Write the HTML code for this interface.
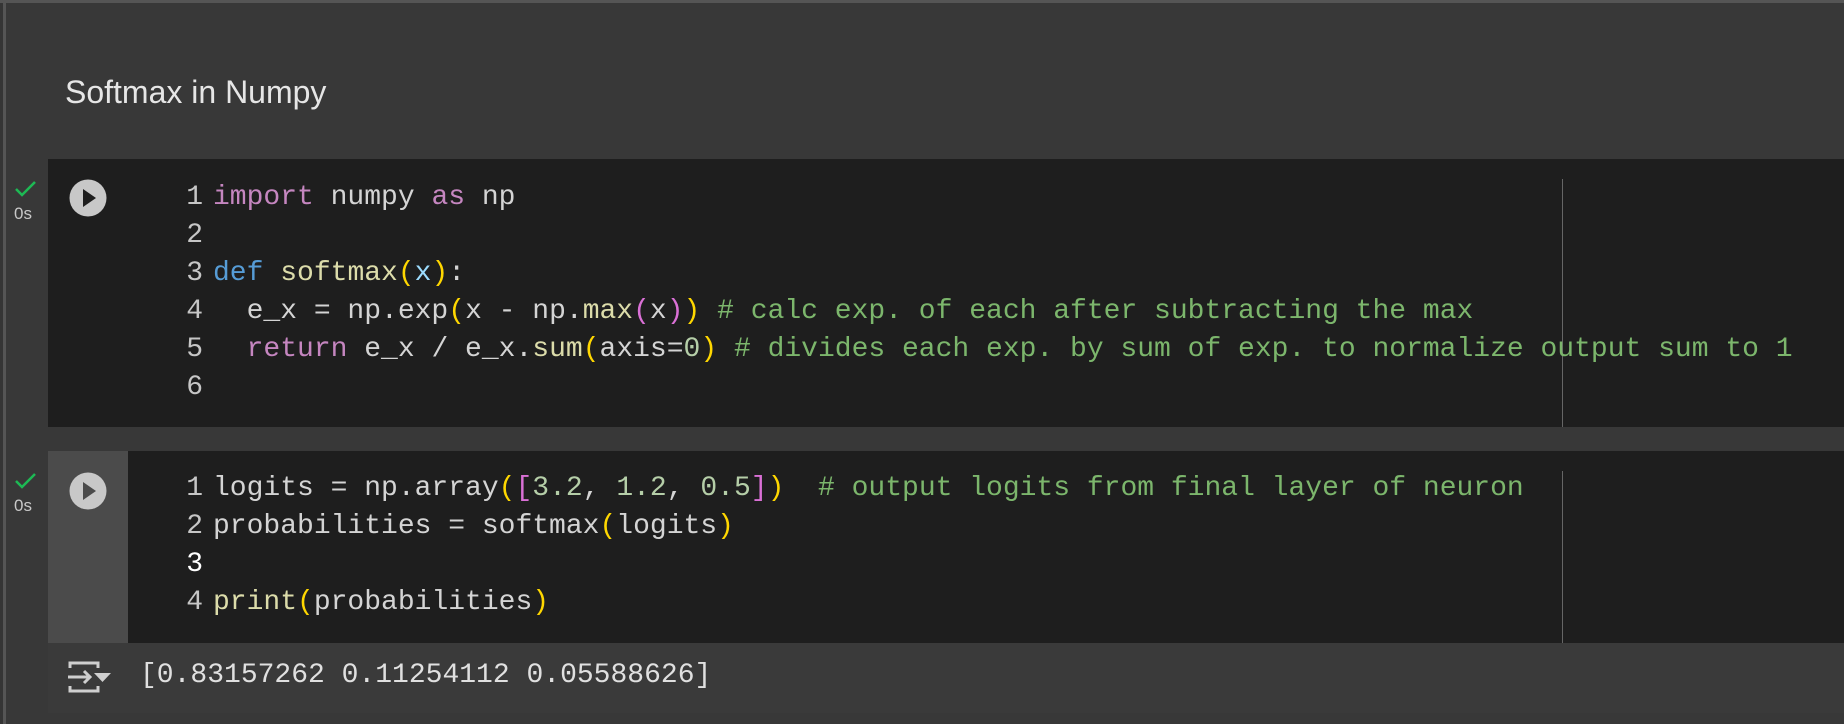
<!DOCTYPE html>
<html><head><style>
body{margin:0;width:1844px;height:724px;background:#353535;overflow:hidden;position:relative;font-family:"Liberation Sans",sans-serif}
.abs{position:absolute}
.code{font-family:"Liberation Mono",monospace;font-size:28px;line-height:38px;color:#d4d4d4;white-space:pre;letter-spacing:0}
.nums{text-align:right;width:40px;color:#c6c6c6}
.k{color:#c586c0}.d{color:#569cd6}.f{color:#dcdcaa}.p{color:#ffd700}.v{color:#9cdcfe}.c{color:#7cb66c}.n{color:#b5cea8}.b{color:#da70d6}
</style></head><body>
<div class="abs" style="left:0;top:0;width:1844px;height:3px;background:#555"></div>
<div class="abs" style="left:3px;top:0;width:3px;height:724px;background:#555"></div>
<div class="abs" style="left:6px;top:3px;width:1838px;height:721px;background:#383838"></div>
<div class="abs" style="left:65px;top:74px;font-size:32px;color:#e6e6e6">Softmax in Numpy</div>

<!-- cell 1 -->
<div class="abs" style="left:48px;top:159px;width:1796px;height:268px;background:#1e1e1e"></div>
<div class="abs" style="left:1562px;top:179px;width:1px;height:248px;background:#666"></div>
<svg class="abs" style="left:14px;top:180px" width="24" height="18"><path d="M2 9 L8 15 L21 2" stroke="#1db954" stroke-width="2.5" fill="none"/></svg>
<div class="abs" style="left:14px;top:204px;font-size:17px;color:#c8c8c8">0s</div>
<svg class="abs" style="left:69px;top:179px" width="38" height="38"><circle cx="19" cy="19" r="18.5" fill="#c8c8c8"/><path d="M14 10 L27 19 L14 28Z" fill="#1e1e1e"/></svg>
<div class="abs code nums" style="left:163px;top:179px">1
2
3
4
5
6</div>
<div class="abs code" style="left:213px;top:179px"><span class="k">import</span> numpy <span class="k">as</span> np

<span class="d">def</span> <span class="f">softmax</span><span class="p">(</span><span class="v">x</span><span class="p">)</span>:
  e_x = np.exp<span class="p">(</span>x - np.<span class="f">max</span><span class="b">(</span>x<span class="b">)</span><span class="p">)</span> <span class="c"># calc exp. of each after subtracting the max</span>
  <span class="k">return</span> e_x / e_x.<span class="f">sum</span><span class="p">(</span>axis=<span class="n">0</span><span class="p">)</span> <span class="c"># divides each exp. by sum of exp. to normalize output sum to 1</span>
</div>

<!-- cell 2 -->
<div class="abs" style="left:48px;top:451px;width:80px;height:192px;background:#4b4b4b"></div>
<div class="abs" style="left:128px;top:451px;width:1716px;height:192px;background:#1e1e1e"></div>
<div class="abs" style="left:48px;top:643px;width:1796px;height:70px;background:#3a3a3a"></div>
<div class="abs" style="left:1562px;top:471px;width:1px;height:172px;background:#666"></div>
<svg class="abs" style="left:14px;top:472px" width="24" height="18"><path d="M2 9 L8 15 L21 2" stroke="#1db954" stroke-width="2.5" fill="none"/></svg>
<div class="abs" style="left:14px;top:496px;font-size:17px;color:#c8c8c8">0s</div>
<svg class="abs" style="left:69px;top:472px" width="38" height="38"><circle cx="19" cy="19" r="18.5" fill="#c8c8c8"/><path d="M14 10 L27 19 L14 28Z" fill="#4b4b4b"/></svg>
<div class="abs code nums" style="left:163px;top:470px">1
2
<span style="color:#fff">3</span>
4</div>
<div class="abs code" style="left:213px;top:470px">logits = np.array<span class="p">(</span><span class="b">[</span><span class="n">3.2</span>, <span class="n">1.2</span>, <span class="n">0.5</span><span class="b">]</span><span class="p">)</span>  <span class="c"># output logits from final layer of neuron</span>
probabilities = softmax<span class="p">(</span>logits<span class="p">)</span>

<span class="f">print</span><span class="p">(</span>probabilities<span class="p">)</span></div>
<svg class="abs" style="left:68px;top:660px" width="44" height="34" fill="none" stroke="#cfcfcf" stroke-width="3"><path d="M2 8 V3 H30 V8"/><path d="M2 26 V31 H30 V26"/><path d="M0 17 H22 M16 11 L22 17 L16 23"/><path d="M26 13 H43 L34.5 22Z" fill="#cfcfcf" stroke="none"/></svg>
<div class="abs code" style="left:140px;top:657px;color:#e0e0e0">[0.83157262 0.11254112 0.05588626]</div>
</body></html>
